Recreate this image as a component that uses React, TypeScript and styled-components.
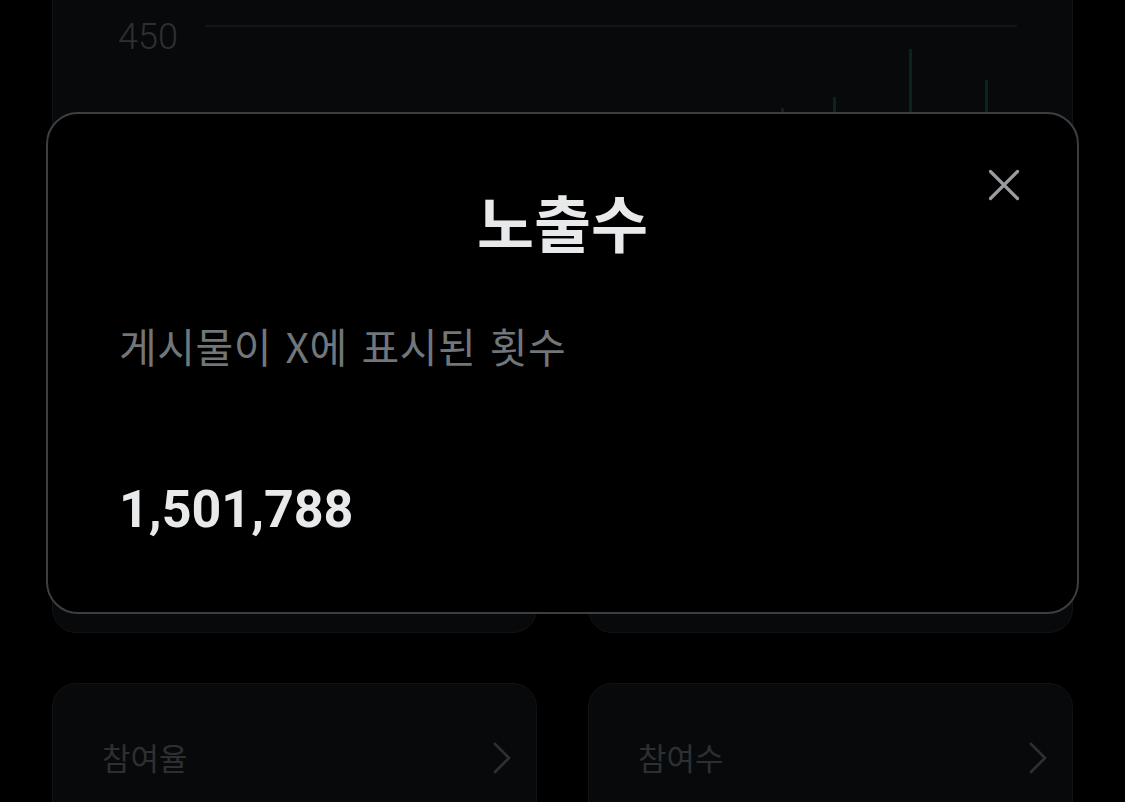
import React from "react";
import styled, { createGlobalStyle } from "styled-components";

const GlobalStyle = createGlobalStyle`
  html, body {
    margin: 0;
    padding: 0;
    background: #000;
  }
  body {
    font-family: "Noto Sans CJK KR", "Noto Sans", sans-serif;
    overflow: hidden;
  }
  * { box-sizing: border-box; }
`;

const Screen = styled.div`
  position: relative;
  width: 1125px;
  height: 802px;
  overflow: hidden;
  background: #000;
`;

const Page = styled.main`
  display: flex;
  flex-direction: column;
  gap: 50px;
  padding: 0 52px;
  margin-top: -100px;
`;

const Card = styled.section`
  background: #16181c;
  border: 1px solid #2a2d31;
  border-radius: 24px;
`;

const ChartCard = styled(Card)`
  height: 503px;
  padding: 118px 54px 0 65px;
  display: grid;
  grid-template-columns: 87px 1fr;
  align-items: start;
`;

const AxisLabel = styled.span`
  font-family: Roboto, "Noto Sans", sans-serif;
  font-weight: 300;
  font-size: 36px;
  line-height: 40px;
  color: #71767b;
  margin-top: -2px;
`;

const Plot = styled.svg`
  display: block;
  width: 100%;
  height: 120px;
  overflow: visible;
`;

const Row = styled.div`
  display: grid;
  grid-template-columns: 1fr 1fr;
  gap: 51px;
`;

const StatCard = styled(Card)<{ $h: number }>`
  height: ${(p) => p.$h}px;
  padding: 53px 24px 0 49px;
  display: flex;
  align-items: flex-start;
  justify-content: space-between;
`;

const StatLabel = styled.span`
  font-size: 31px;
  line-height: 40px;
  color: #71767b;
`;

const Chevron = styled.svg`
  width: 20px;
  height: 34px;
  margin-top: 4px;
  color: #71767b;
`;

const Backdrop = styled.div`
  position: absolute;
  inset: 0;
  background: rgba(0, 0, 0, 0.6);
  display: flex;
  justify-content: center;
  align-items: flex-start;
  padding-top: 112px;
`;

const Sheet = styled.div`
  position: relative;
  width: 1033px;
  height: 502px;
  background: #000;
  border: 2px solid #3c3f42;
  border-radius: 32px;
  padding: 71px 71px 0;
  display: flex;
  flex-direction: column;
`;

const CloseButton = styled.button`
  position: absolute;
  top: 53px;
  right: 55px;
  width: 36px;
  height: 36px;
  padding: 0;
  border: none;
  background: transparent;
  color: #9a9da0;
  display: flex;
  align-items: center;
  justify-content: center;
  cursor: pointer;
`;

const Title = styled.h2`
  margin: 0;
  text-align: center;
  font-size: 62px;
  line-height: 72px;
  font-weight: 700;
  color: #e7e9ea;
`;

const Description = styled.p`
  margin: 64px 0 0;
  font-size: 41px;
  line-height: 48px;
  font-weight: 400;
  letter-spacing: 0.5px;
  word-spacing: 4px;
  color: #71767b;
`;

const Value = styled.div`
  margin-top: 109px;
  font-family: Roboto, "Noto Sans", sans-serif;
  font-size: 52px;
  line-height: 64px;
  font-weight: 700;
  color: #e7e9ea;
`;

const PLOT_LEFT = 205;
const PLOT_TOP = 19;
const bars = [
  { x: 782, top: 108 },
  { x: 834, top: 97 },
  { x: 910, top: 49 },
  { x: 986, top: 80 },
];

function ChevronIcon() {
  return (
    <Chevron viewBox="0 0 20 34" fill="none">
      <path d="M3 3 L17 17 L3 31" stroke="currentColor" strokeWidth="2.6" strokeLinecap="round" strokeLinejoin="round" />
    </Chevron>
  );
}

export default function App() {
  return (
    <>
      <GlobalStyle />
      <Screen>
        <Page>
          <ChartCard>
            <AxisLabel>450</AxisLabel>
            <Plot>
              <line x1="0" y1={26 - PLOT_TOP} x2="812" y2={26 - PLOT_TOP} stroke="#2f3336" strokeWidth="2" />
              {bars.map((b) => (
                <rect
                  key={b.x}
                  x={b.x - PLOT_LEFT - 1}
                  y={b.top - PLOT_TOP}
                  width="3"
                  height={140 - (b.top - PLOT_TOP)}
                  fill="#1a9e7a"
                  opacity="0.5"
                />
              ))}
            </Plot>
          </ChartCard>
          <Row>
            <StatCard $h={180} />
            <StatCard $h={180} />
          </Row>
          <Row>
            <StatCard $h={200}>
              <StatLabel>참여율</StatLabel>
              <ChevronIcon />
            </StatCard>
            <StatCard $h={200}>
              <StatLabel>참여수</StatLabel>
              <ChevronIcon />
            </StatCard>
          </Row>
        </Page>
        <Backdrop>
          <Sheet role="dialog" aria-label="노출수">
            <CloseButton aria-label="닫기">
              <svg width="34" height="34" viewBox="0 0 34 34" fill="none">
                <path d="M3.5 3.5 L30.5 30.5 M30.5 3.5 L3.5 30.5" stroke="currentColor" strokeWidth="3.2" strokeLinecap="round" />
              </svg>
            </CloseButton>
            <Title>노출수</Title>
            <Description>게시물이 X에 표시된 횟수</Description>
            <Value>1,501,788</Value>
          </Sheet>
        </Backdrop>
      </Screen>
    </>
  );
}
